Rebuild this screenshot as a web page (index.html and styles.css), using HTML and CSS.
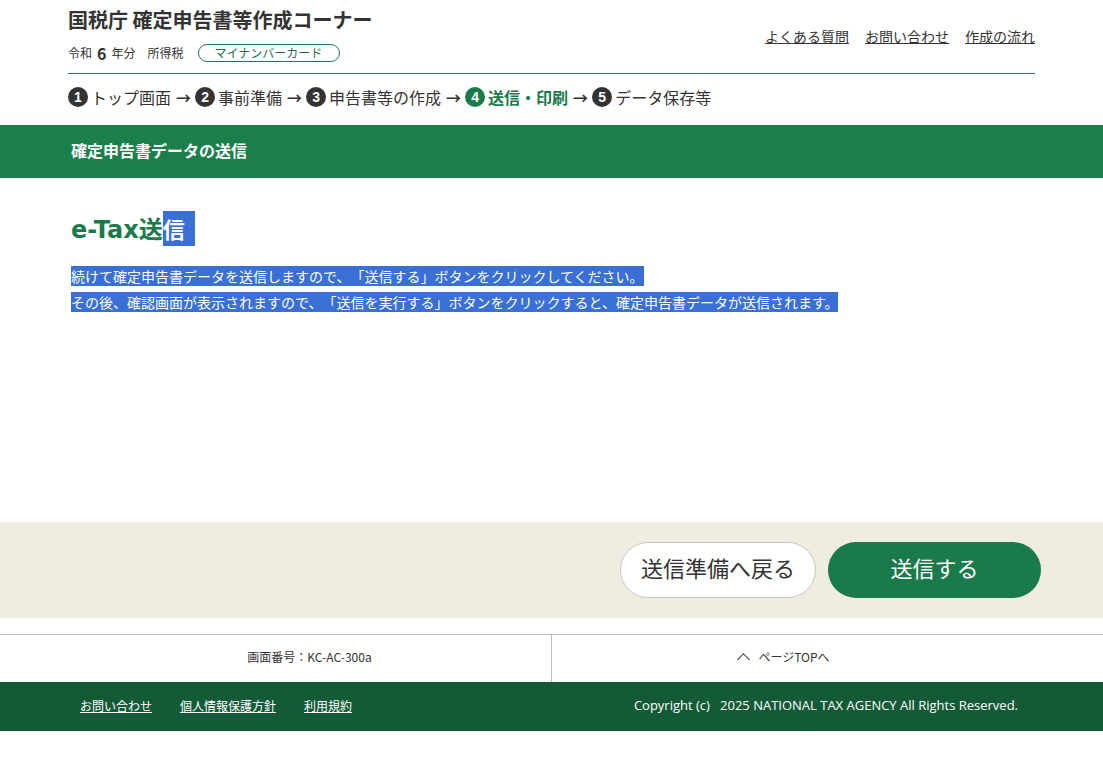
FILE: index.html
```html
<!DOCTYPE html>
<html lang="ja">
<head>
<meta charset="utf-8">
<title>確定申告書データの送信</title>
<link rel="stylesheet" href="styles.css">
</head>
<body>
<header class="header">
  <div class="header-top">
    <div class="brand">
      <div class="site-title">国税庁 確定申告書等作成コーナー</div>
      <div class="meta">
        <span>令和</span><span class="year">6</span><span>年分</span>
        <span class="tax">所得税</span>
        <span class="badge">マイナンバーカード</span>
      </div>
    </div>
    <nav class="head-links">
      <a href="#">よくある質問</a>
      <a href="#">お問い合わせ</a>
      <a href="#">作成の流れ</a>
    </nav>
  </div>
  <ol class="steps">
    <li class="step"><span class="num">1</span>トップ画面</li>
    <li class="arrow">→</li>
    <li class="step"><span class="num">2</span>事前準備</li>
    <li class="arrow">→</li>
    <li class="step"><span class="num">3</span>申告書等の作成</li>
    <li class="arrow">→</li>
    <li class="step current"><span class="num">4</span>送信・印刷</li>
    <li class="arrow">→</li>
    <li class="step"><span class="num">5</span>データ保存等</li>
  </ol>
</header>

<div class="band">
  <h1 class="band-title">確定申告書データの送信</h1>
</div>

<main class="main">
  <h2 class="heading">e-Tax送<span class="sel sel-head">信</span></h2>
  <p class="lead"><span class="sel">続けて確定申告書データを送信しますので、「送信する」ボタンをクリックしてください。 </span><br><span class="sel">その後、確認画面が表示されますので、「送信を実行する」ボタンをクリックすると、確定申告書データが送信されます。</span></p>
</main>

<div class="actions">
  <div class="actions-inner">
    <button class="btn btn-back">送信準備へ戻る</button>
    <button class="btn btn-send">送信する</button>
  </div>
</div>

<div class="subfoot">
  <div class="subfoot-inner">
    <div class="subfoot-cell">画面番号：KC-AC-300a</div>
    <div class="subfoot-cell"><span class="chev"></span>ページTOPへ</div>
  </div>
</div>

<footer class="footer">
  <nav class="foot-links">
    <a href="#">お問い合わせ</a>
    <a href="#">個人情報保護方針</a>
    <a href="#">利用規約</a>
  </nav>
  <div class="copy">Copyright (c)&nbsp;&nbsp; 2025 NATIONAL TAX AGENCY All Rights Reserved.</div>
</footer>
</body>
</html>
```

FILE: styles.css
```css
* { box-sizing: border-box; }
html, body { margin: 0; padding: 0; background: #fff; }
body {
  font-family: "Noto Sans CJK JP", "Noto Sans", sans-serif;
  color: #333;
  text-spacing-trim: space-all;
}

.header {
  width: 967px;
  margin: 0 auto;
}
.header-top {
  display: flex;
  justify-content: space-between;
  align-items: flex-start;
  border-bottom: 1px solid #2a7a63;
  height: 74px;
}
.site-title {
  font-size: 20px;
  font-weight: bold;
  line-height: 24px;
  margin-top: 8px;
  color: #333;
}
.meta {
  display: flex;
  align-items: center;
  font-size: 12px;
  line-height: 18px;
  margin-top: 12px;
}
.meta .year {
  font-size: 16px;
  font-weight: bold;
  margin: 0 5px;
}
.meta .tax { margin-left: 12px; }
.badge {
  margin-left: 14px;
  border: 1px solid #1f7a55;
  border-radius: 9px;
  width: 142px;
  height: 18px;
  line-height: 16px;
  text-align: center;
  color: #1f6b50;
}
.head-links {
  display: flex;
  gap: 16px;
  margin-top: 26px;
}
.head-links a {
  font-size: 14px;
  color: #333;
  line-height: 20px;
}

.steps {
  list-style: none;
  margin: 0;
  padding: 0 0 5px;
  display: flex;
  align-items: center;
  height: 51px;
  font-size: 16px;
}
.step {
  display: flex;
  align-items: center;
}
.num {
  display: inline-flex;
  align-items: center;
  justify-content: center;
  width: 20px;
  height: 20px;
  border-radius: 50%;
  background: #333;
  color: #fff;
  font-size: 14px;
  font-weight: bold;
  font-family: "Liberation Sans", sans-serif;
  margin-right: 3px;
}
.arrow {
  font-weight: bold;
  margin: 0 4px 0 5px;
  font-size: 15px;
}
.step.current {
  color: #1a7a4a;
  font-weight: bold;
}
.step.current .num { background: #1a7a4a; }

.band {
  background: #1b7f4c;
  height: 53px;
  display: flex;
  align-items: center;
  padding-bottom: 3px;
}
.band-title {
  width: 967px;
  margin: 0 auto;
  padding-left: 3px;
  font-size: 16px;
  font-weight: bold;
  color: #fff;
}

.main {
  width: 967px;
  margin: 0 auto;
  height: 344px;
  padding: 33px 0 0 3px;
}
.heading {
  margin: 0;
  font-size: 24px;
  font-weight: bold;
  color: #1a7a4a;
  line-height: 35px;
  font-family: "DejaVu Sans", "Noto Sans CJK JP", sans-serif;
}
.sel {
  background: #3a6fd6;
  color: #fff;
}
.sel-head {
  display: inline-block;
  padding-right: 10px;
  font-size: 22px;
  font-family: "Noto Sans CJK JP", sans-serif;
}
.lead {
  margin: 15px 0 0;
  font-size: 14px;
  line-height: 26px;
}

.actions {
  background: #efece2;
  height: 96px;
  display: flex;
  align-items: center;
}
.actions-inner {
  width: 967px;
  margin: 0 auto;
  display: flex;
  justify-content: flex-end;
  gap: 12px;
  position: relative;
  left: 6px;
}
.btn {
  font-family: "Noto Sans CJK JP", sans-serif;
  font-size: 22px;
  border-radius: 28px;
  height: 56px;
  padding: 0 0 7px;
  cursor: pointer;
}
.btn-back {
  width: 196px;
  background: #fff;
  color: #333;
  border: 1px solid #c9c5b8;
}
.btn-send {
  width: 213px;
  background: #1a7a4a;
  color: #fff;
  border: none;
}

.subfoot {
  margin-top: 16px;
  border-top: 1px solid #bdbdbd;
  height: 48px;
}
.subfoot-inner {
  width: 967px;
  height: 100%;
  margin: 0 auto;
  display: grid;
  grid-template-columns: 483px 1fr;
}
.subfoot-cell {
  display: flex;
  align-items: center;
  justify-content: center;
  font-size: 12px;
  color: #333;
  padding-bottom: 4px;
}
.subfoot-cell + .subfoot-cell { border-left: 1px solid #bdbdbd; padding-right: 18px; }
.chev {
  width: 9px;
  height: 9px;
  border-left: 1px solid #333;
  border-top: 1px solid #333;
  transform: rotate(45deg);
  margin: 5px 10px 0 0;
}

.footer {
  background: #135b37;
  height: 49px;
  display: flex;
  align-items: center;
  justify-content: space-between;
  padding: 0 85px 3px 80px;
  color: #fff;
  font-size: 12px;
}
.foot-links {
  display: flex;
  gap: 28px;
}
.foot-links a { color: #fff; }
.copy { font-family: "Open Sans", "Noto Sans CJK JP", sans-serif; font-size: 13px; }
```
